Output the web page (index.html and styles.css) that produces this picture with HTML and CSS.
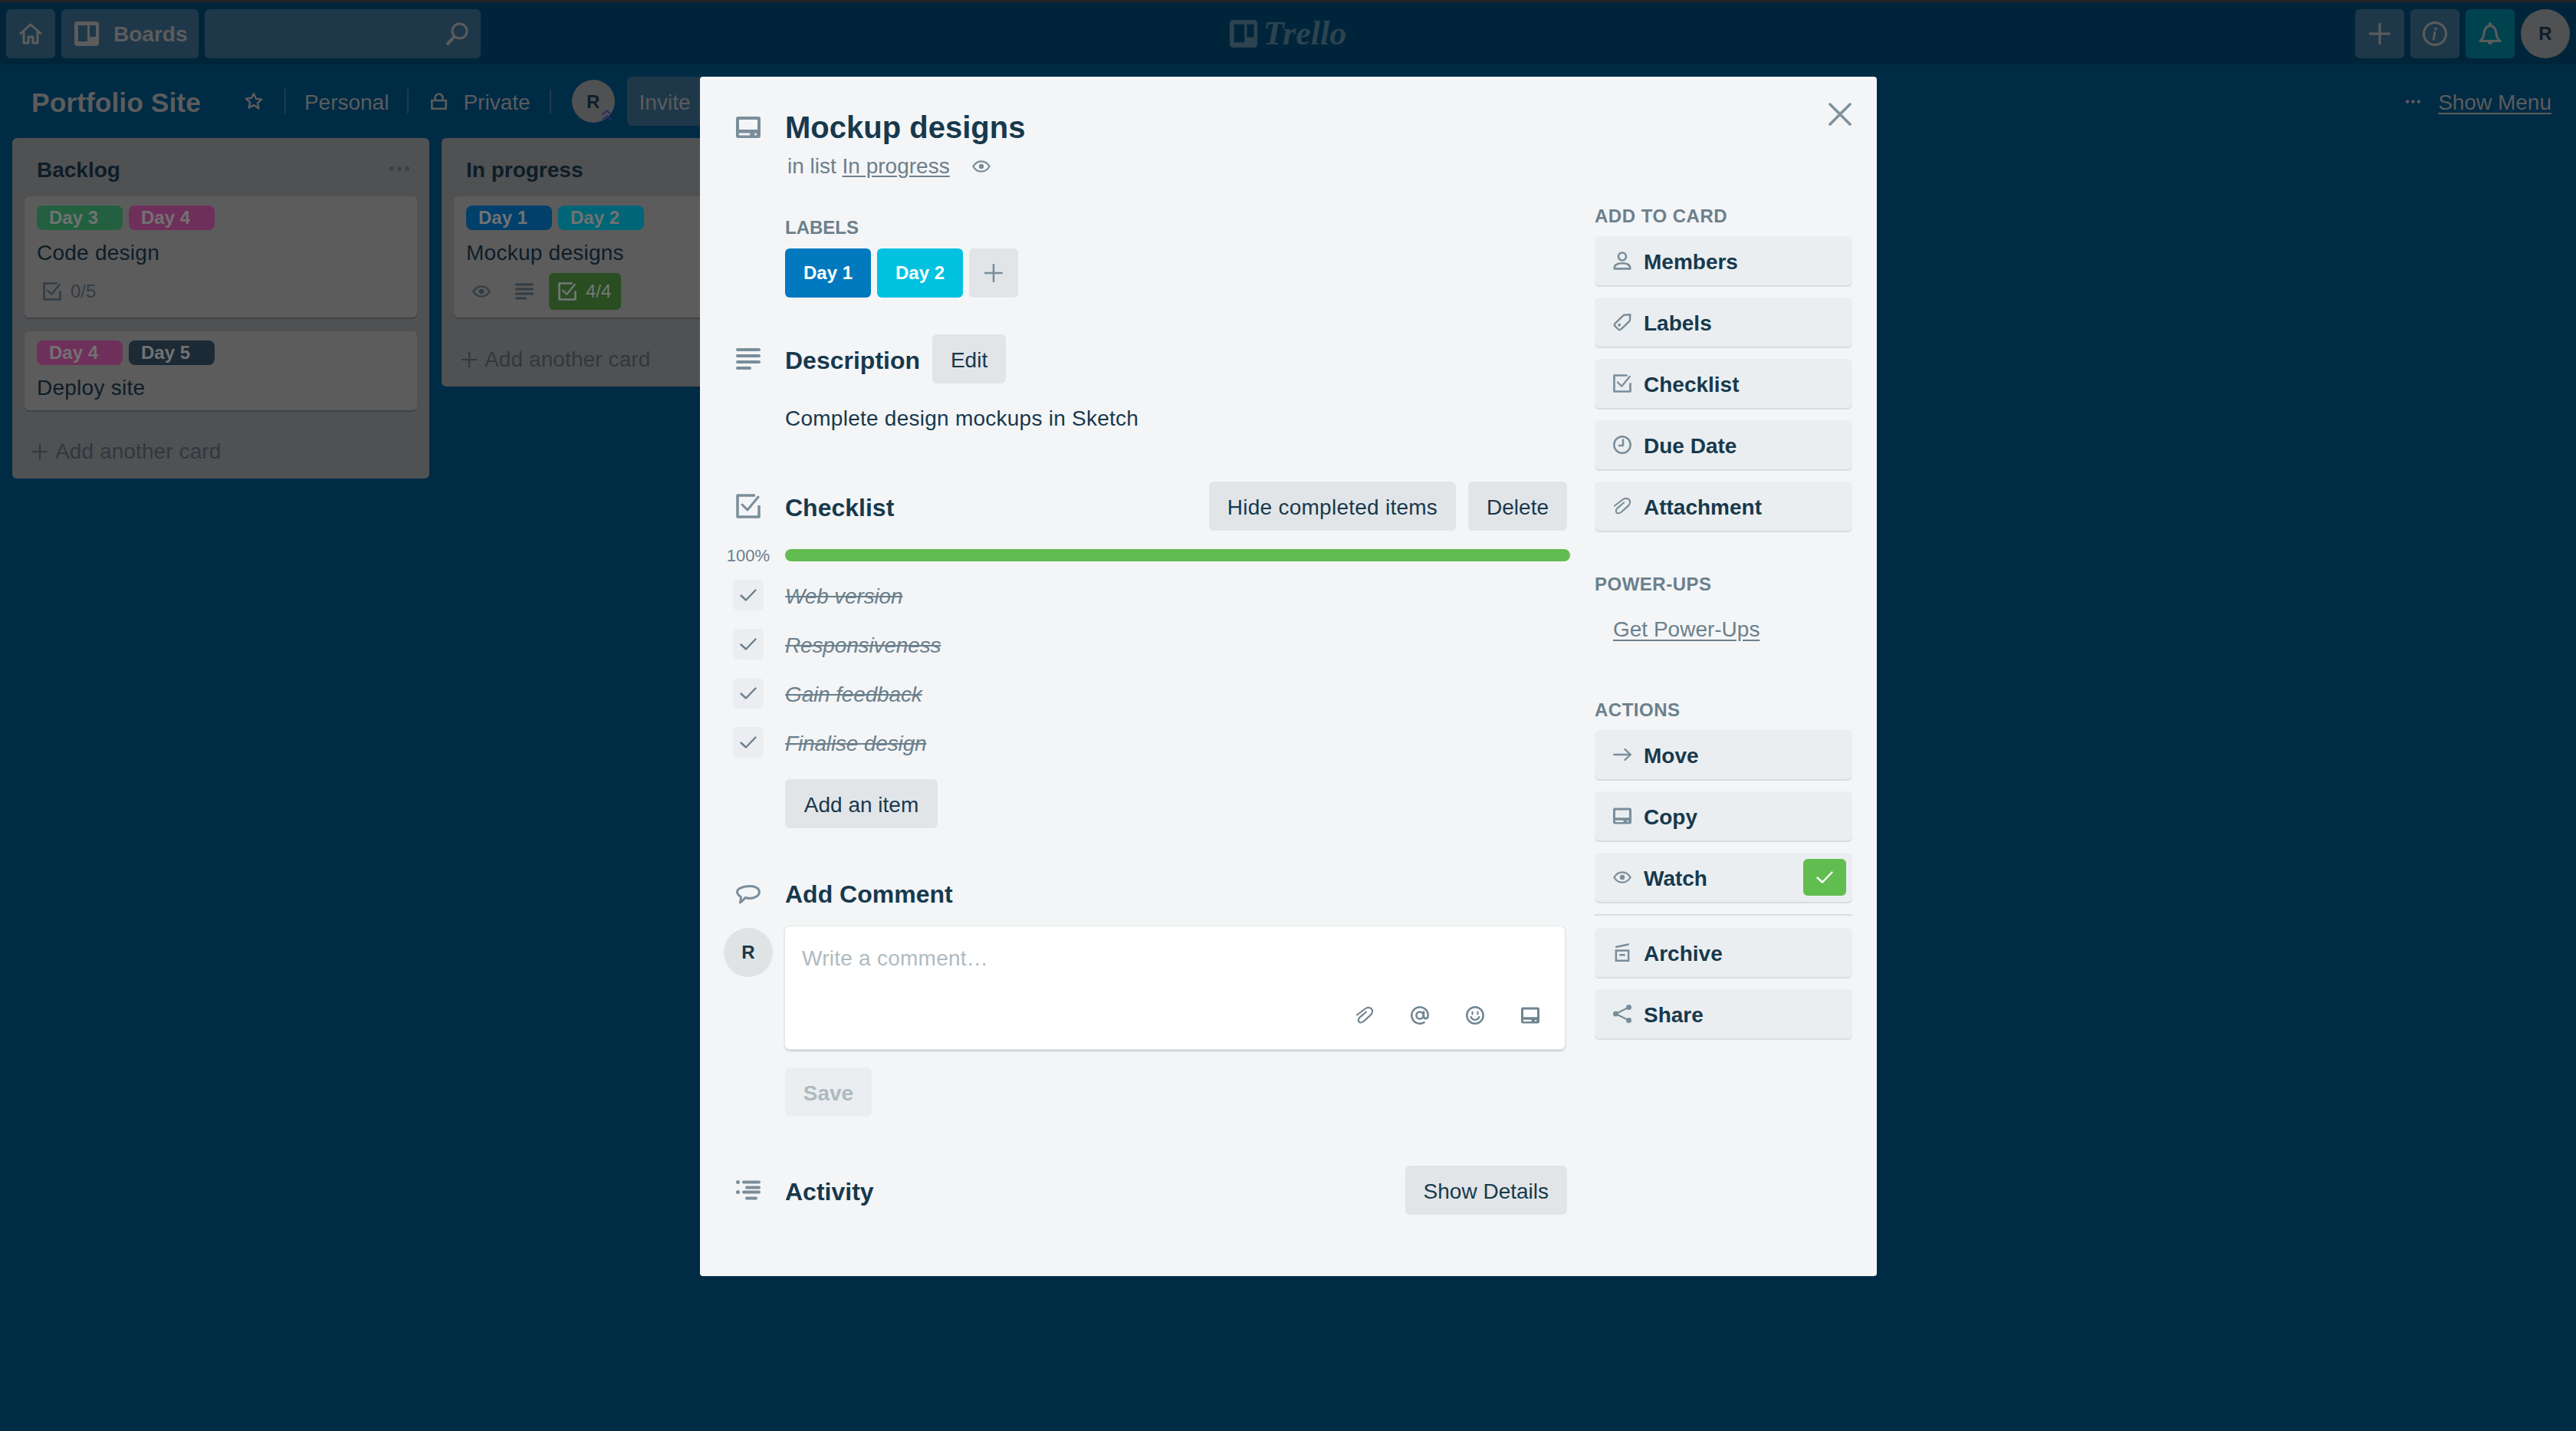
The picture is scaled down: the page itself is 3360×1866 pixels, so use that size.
FILE: index.html
```html
<!DOCTYPE html>
<html lang="en">
<head>
<meta charset="utf-8">
<title>Mockup designs on Portfolio Site</title>
<link rel="stylesheet" href="styles.css">
</head>
<body>
<svg class="sprite" xmlns="http://www.w3.org/2000/svg">
  <symbol id="i-card" viewBox="0 0 32 28"><path fill="currentColor" fill-rule="evenodd" d="M3 0h26a3 3 0 0 1 3 3v22a3 3 0 0 1-3 3H3a3 3 0 0 1-3-3V3a3 3 0 0 1 3-3zm1 4v13h24V4zm1 17.500a1.500 1.500 0 0 0 0 3h12a1.500 1.500 0 0 0 0-3zm20.500 0a1.500 1.500 0 0 0 0 3 1.500 1.500 0 0 0 0-3z"/></symbol>
  <symbol id="i-desc" viewBox="0 0 32 28"><g fill="currentColor"><rect width="32" height="4" rx="2"/><rect y="8" width="32" height="4" rx="2"/><rect y="16" width="32" height="4" rx="2"/><rect y="24" width="20" height="4" rx="2"/></g></symbol>
  <symbol id="i-check" viewBox="0 0 32 32"><path fill="none" stroke="currentColor" stroke-width="3.500" stroke-linejoin="round" d="M25 2H2v28h28V15"/><path fill="none" stroke="currentColor" stroke-width="3" stroke-linecap="round" stroke-linejoin="round" d="M8 14l7 7L29 4"/></symbol>
  <symbol id="i-eye" viewBox="0 0 24 16"><path fill="none" stroke="currentColor" stroke-width="2.200" d="M1.300 8C4 3.600 8 1.300 12 1.300S20 3.600 22.700 8C20 12.400 16 14.700 12 14.700S4 12.400 1.300 8z"/><circle cx="12" cy="8" r="3.200" fill="currentColor"/></symbol>
  <symbol id="i-plus" viewBox="0 0 24 24"><path fill="none" stroke="currentColor" stroke-width="2.600" stroke-linecap="round" d="M12 1v22M1 12h22"/></symbol>
  <symbol id="i-bubble" viewBox="0 0 32 25"><path fill="none" stroke="currentColor" stroke-width="3" stroke-linejoin="round" d="M19 1.600c6.500 0 11.400 3 11.400 7.400 0 5-5.500 8.400-12.400 8.400-2.200 0-4.300-.3-6-.9-1.500 2.300-3.800 4.700-6.600 6.500.8-2.300 1.200-4.500 1-7.500C3 13.500 1.600 11.300 1.600 9 1.600 4.600 9 1.600 19 1.600z"/></symbol>
  <symbol id="i-activity" viewBox="0 0 32 27"><g fill="currentColor"><circle cx="2.500" cy="3" r="2.500"/><rect x="8" y="1" width="24" height="4" rx="2"/><rect x="12" y="8" width="20" height="4" rx="2"/><circle cx="2.500" cy="16" r="2.500"/><rect x="8" y="14" width="24" height="4" rx="2"/><rect x="12" y="22" width="16" height="4" rx="2"/></g></symbol>
  <symbol id="i-clip" viewBox="0 0 24 24"><path fill="none" stroke="currentColor" stroke-width="2.200" stroke-linecap="round" stroke-linejoin="round" d="M2 11.500L12.500 3.500c3-2.300 7-2 8.700.3 1.700 2.300.8 5.700-2 8.300L11 19.500c-2.200 2-5 2.400-6.400.9-1.400-1.500-.9-4 1.300-6L14 7.500"/></symbol>
  <symbol id="i-at" viewBox="0 0 24 24"><path fill="none" stroke="currentColor" stroke-width="2.500" stroke-linecap="round" d="M17.500 21.200A10.700 10.700 0 1 1 22.700 12c0 2.500-1 4.200-2.800 4.200S17 14.800 17 12.500V7.500"/><circle cx="12" cy="12" r="4.600" fill="none" stroke="currentColor" stroke-width="2.500"/></symbol>
  <symbol id="i-smile" viewBox="0 0 24 24"><circle cx="12" cy="12" r="10.700" fill="none" stroke="currentColor" stroke-width="2.500"/><path fill="none" stroke="currentColor" stroke-width="2.200" stroke-linecap="round" d="M8.500 7.500v3M15.500 7.500v3M6.500 14c1 2.500 3 3.800 5.500 3.800s4.500-1.300 5.500-3.800"/></symbol>
  <symbol id="i-member" viewBox="0 0 22 22"><circle cx="11" cy="6" r="4.600" fill="none" stroke="currentColor" stroke-width="2.400"/><path fill="none" stroke="currentColor" stroke-width="2.400" stroke-linejoin="round" d="M1.500 20.500c0-4.500 3.500-6.500 9.500-6.500s9.500 2 9.500 6.500z"/></symbol>
  <symbol id="i-tag" viewBox="0 0 22 22"><path fill="none" stroke="currentColor" stroke-width="2.200" stroke-linejoin="round" d="M13 2.500L20.500 2 20 9.500 9.500 19.500c-1 1-2.500 1-3.500 0L2.500 16c-1-1-1-2.500 0-3.500z"/><circle cx="7.500" cy="14.500" r="1.800" fill="currentColor"/></symbol>
  <symbol id="i-clock" viewBox="0 0 24 24"><circle cx="12" cy="12" r="10.700" fill="none" stroke="currentColor" stroke-width="2.500"/><path fill="none" stroke="currentColor" stroke-width="2.500" stroke-linecap="round" stroke-linejoin="round" d="M13 5.500V13H8"/></symbol>
  <symbol id="i-arrow" viewBox="0 0 21 15"><path fill="none" stroke="currentColor" stroke-width="2" stroke-linecap="round" stroke-linejoin="round" d="M1 7.500h19M13.500 1.500l6.500 6-6.500 6"/></symbol>
  <symbol id="i-archive" viewBox="0 0 18 23"><path fill="none" stroke="currentColor" stroke-width="2.400" d="M1.200 9h15.600v12.800H1.200zM5.500 14.500h7"/><path stroke="currentColor" stroke-width="2.400" stroke-linecap="round" d="M1.500 4.500L16.500 1.500"/></symbol>
  <symbol id="i-share" viewBox="0 0 24 24"><g fill="currentColor"><circle cx="3.500" cy="12" r="3.500"/><circle cx="20.500" cy="3.500" r="3.500"/><circle cx="20.500" cy="20.500" r="3.500"/></g><path fill="none" stroke="currentColor" stroke-width="2.200" d="M3.500 12L20.500 3.500M3.500 12L20.500 20.500"/></symbol>
  <symbol id="i-tick" viewBox="0 0 22 16"><path fill="none" stroke="currentColor" stroke-width="2.400" stroke-linecap="round" stroke-linejoin="round" d="M1.500 8.500L8 14.500 20.500 1.500"/></symbol>
  <symbol id="i-boards" viewBox="0 0 32 32"><path fill="currentColor" fill-rule="evenodd" d="M4 0h24a4 4 0 0 1 4 4v24a4 4 0 0 1-4 4H4a4 4 0 0 1-4-4V4a4 4 0 0 1 4-4zm1 5v21h12V5zm15 0v15h8V5z"/></symbol>
  <symbol id="i-dots" viewBox="0 0 26 6"><g fill="currentColor"><circle cx="3" cy="3" r="3"/><circle cx="13" cy="3" r="3"/><circle cx="23" cy="3" r="3"/></g></symbol>
</svg>

<div class="page">
  <header class="topbar">
    <div class="topbar-left">
      <a class="nav-btn nav-square"><svg class="ico-home" viewBox="0 0 30 28"><path fill="none" stroke="currentColor" stroke-width="3" stroke-linecap="round" stroke-linejoin="round" d="M2 13.500L15 2l13 11.500M6 10.500V26h6v-8h6v8h6V10.500"/></svg></a>
      <a class="nav-btn nav-boards"><svg class="ico-32"><use href="#i-boards"/></svg><span class="nav-label">Boards</span></a>
      <div class="nav-btn nav-search"><svg class="ico-search" viewBox="0 0 30 30"><circle cx="18.500" cy="11.500" r="9.500" fill="none" stroke="currentColor" stroke-width="3"/><path stroke="currentColor" stroke-width="4" stroke-linecap="round" d="M11.500 19L3 28"/></svg></div>
    </div>
    <div class="logo"><svg class="ico-logo"><use href="#i-boards"/></svg><span class="logo-word">Trello</span></div>
    <div class="topbar-right">
      <a class="nav-btn nav-square"><svg class="ico-28"><use href="#i-plus"/></svg></a>
      <a class="nav-btn nav-square"><svg class="ico-info" viewBox="0 0 32 32"><circle cx="16" cy="16" r="14.500" fill="none" stroke="currentColor" stroke-width="3"/><path stroke="currentColor" stroke-width="2.800" stroke-linecap="round" d="M15.800 14.500l-1.600 9"/><circle cx="17" cy="9.500" r="1.900" fill="currentColor"/></svg></a>
      <a class="nav-btn nav-square nav-bell"><svg class="ico-bell" viewBox="0 0 30 32"><path fill="none" stroke="currentColor" stroke-width="3" stroke-linejoin="round" d="M2 25.500c2.500-2 4.500-4 5-10 .4-5 3.400-10 8-10s7.600 5 8 10c.5 6 2.500 8 5 10z"/><path fill="currentColor" d="M13 3a2 2 0 0 1 4 0v3h-4zM12 27h6a3 3 0 0 1-6 0z"/></svg></a>
      <div class="top-avatar">R</div>
    </div>
  </header>

  <div class="board-bar">
    <h1 class="board-name">Portfolio Site</h1>
    <svg class="ico-star" viewBox="0 0 24 24"><path fill="none" stroke="currentColor" stroke-width="2.400" stroke-linejoin="round" d="M12 2l3 6.700 7.300.8-5.400 4.900 1.500 7.200L12 17l-6.400 3.600 1.500-7.200L1.700 8.500 9 7.700z"/></svg>
    <span class="bar-sep"></span>
    <span class="bar-text">Personal</span>
    <span class="bar-sep bar-sep-b"></span>
    <svg class="ico-lock" viewBox="0 0 21 22"><path fill="none" stroke="currentColor" stroke-width="2.600" d="M1.300 10h18.400v10.700H1.300zM5.500 10V6.500a5 5 0 0 1 10 0V10"/></svg>
    <span class="bar-text bar-private">Private</span>
    <span class="bar-sep bar-sep-c"></span>
    <div class="board-avatar">R<svg class="ico-admin" viewBox="0 0 15 15"><path fill="none" stroke="#2a2a66" stroke-width="2" d="M1.500 6.500L7.500 1.500l6 5M1.500 13l6-5 6 5"/></svg></div>
    <a class="invite">Invite</a>
    <div class="bar-right"><svg class="ico-dots-small"><use href="#i-dots"/></svg><a class="show-menu">Show Menu</a></div>
  </div>

  <main class="lists">
    <section class="list">
      <div class="list-head"><h2>Backlog</h2><svg class="ico-dots"><use href="#i-dots"/></svg></div>
      <article class="card">
        <div class="card-labels"><span class="chip chip-green">Day 3</span><span class="chip chip-pink">Day 4</span></div>
        <p class="card-title">Code design</p>
        <div class="badges"><span class="badge"><svg class="ico-24"><use href="#i-check"/></svg>0/5</span></div>
      </article>
      <article class="card card-short">
        <div class="card-labels"><span class="chip chip-pink">Day 4</span><span class="chip chip-black">Day 5</span></div>
        <p class="card-title">Deploy site</p>
      </article>
      <div class="add-card"><svg class="ico-20"><use href="#i-plus"/></svg>Add another card</div>
    </section>
    <section class="list">
      <div class="list-head"><h2>In progress</h2></div>
      <article class="card">
        <div class="card-labels"><span class="chip chip-blue">Day 1</span><span class="chip chip-sky">Day 2</span></div>
        <p class="card-title">Mockup designs</p>
        <div class="badges">
          <span class="badge"><svg class="ico-eye-24"><use href="#i-eye"/></svg></span>
          <span class="badge badge-desc"><svg class="ico-desc-24"><use href="#i-desc"/></svg></span>
          <span class="badge badge-done"><svg class="ico-24"><use href="#i-check"/></svg>4/4</span>
        </div>
      </article>
      <div class="add-card"><svg class="ico-20"><use href="#i-plus"/></svg>Add another card</div>
    </section>
  </main>

  <div class="modal">
    <svg class="modal-close" viewBox="0 0 30 30"><path stroke="currentColor" stroke-width="3.600" stroke-linecap="round" d="M2 2l26 26M28 2L2 28"/></svg>
    <div class="modal-main">
      <div class="row row-title"><svg class="sec-icon ico-card"><use href="#i-card"/></svg><h2 class="modal-title">Mockup designs</h2></div>
      <p class="in-list">in list <a>In progress</a><svg class="ico-eye-24 in-list-eye"><use href="#i-eye"/></svg></p>

      <h3 class="caption labels-caption">LABELS</h3>
      <div class="label-row">
        <span class="label-big label-blue">Day 1</span>
        <span class="label-big label-sky">Day 2</span>
        <button class="btn btn-plus"><svg class="ico-24"><use href="#i-plus"/></svg></button>
      </div>

      <div class="row row-desc"><svg class="sec-icon ico-card"><use href="#i-desc"/></svg><h3 class="sec-title">Description</h3><button class="btn btn-edit">Edit</button></div>
      <p class="desc-text">Complete design mockups in Sketch</p>

      <div class="row row-check"><svg class="sec-icon ico-check-32"><use href="#i-check"/></svg><h3 class="sec-title">Checklist</h3>
        <div class="row-actions"><button class="btn btn-hide">Hide completed items</button><button class="btn">Delete</button></div>
      </div>
      <div class="progress"><span class="progress-num">100%</span><div class="progress-bar"></div></div>
      <ul class="items">
        <li class="item"><span class="tick"><svg class="ico-tick"><use href="#i-tick"/></svg></span><span class="item-text">Web version</span></li>
        <li class="item"><span class="tick"><svg class="ico-tick"><use href="#i-tick"/></svg></span><span class="item-text">Responsiveness</span></li>
        <li class="item"><span class="tick"><svg class="ico-tick"><use href="#i-tick"/></svg></span><span class="item-text">Gain feedback</span></li>
        <li class="item"><span class="tick"><svg class="ico-tick"><use href="#i-tick"/></svg></span><span class="item-text">Finalise design</span></li>
      </ul>
      <button class="btn btn-add">Add an item</button>

      <div class="row row-comment"><svg class="sec-icon ico-bubble"><use href="#i-bubble"/></svg><h3 class="sec-title">Add Comment</h3></div>
      <div class="comment">
        <div class="comment-avatar">R</div>
        <div class="comment-box">
          <span class="placeholder">Write a comment…</span>
          <div class="comment-tools">
            <svg class="ico-24"><use href="#i-clip"/></svg>
            <svg class="ico-24"><use href="#i-at"/></svg>
            <svg class="ico-24"><use href="#i-smile"/></svg>
            <svg class="ico-24"><use href="#i-card"/></svg>
          </div>
        </div>
      </div>
      <button class="btn btn-save">Save</button>

      <div class="row row-activity"><svg class="sec-icon ico-card"><use href="#i-activity"/></svg><h3 class="sec-title">Activity</h3><button class="btn btn-details">Show Details</button></div>
    </div>

    <aside class="sidebar">
      <h3 class="caption side-caption">ADD TO CARD</h3>
      <div class="side-group">
        <a class="side-btn"><svg class="side-ico"><use href="#i-member"/></svg>Members</a>
        <a class="side-btn"><svg class="side-ico"><use href="#i-tag"/></svg>Labels</a>
        <a class="side-btn"><svg class="side-ico"><use href="#i-check"/></svg>Checklist</a>
        <a class="side-btn"><svg class="side-ico"><use href="#i-clock"/></svg>Due Date</a>
        <a class="side-btn"><svg class="side-ico"><use href="#i-clip"/></svg>Attachment</a>
      </div>
      <h3 class="caption side-caption side-powerups">POWER-UPS</h3>
      <a class="get-powerups">Get Power-Ups</a>
      <h3 class="caption side-caption side-actions">ACTIONS</h3>
      <div class="side-group">
        <a class="side-btn"><svg class="side-ico"><use href="#i-arrow"/></svg>Move</a>
        <a class="side-btn"><svg class="side-ico"><use href="#i-card"/></svg>Copy</a>
        <a class="side-btn">
          <svg class="side-ico"><use href="#i-eye"/></svg>Watch
          <span class="watch-on"><svg class="ico-tick"><use href="#i-tick"/></svg></span>
        </a>
        <hr class="side-rule">
        <a class="side-btn"><svg class="side-ico"><use href="#i-archive"/></svg>Archive</a>
        <a class="side-btn"><svg class="side-ico"><use href="#i-share"/></svg>Share</a>
      </div>
    </aside>
  </div>
</div>
</body>
</html>
```

FILE: styles.css
```css
* { box-sizing: border-box; }
html, body { margin: 0; padding: 0; }
body { background: #002b45; font-family: "Liberation Sans", Arial, sans-serif; font-size: 28px; color: #17394d; overflow: hidden; }
h1, h2, h3, p, ul { margin: 0; padding: 0; }
ul { list-style: none; }
a { color: inherit; }
svg { display: block; flex: none; }
.sprite { width: 0; height: 0; position: absolute; }

.page { position: relative; width: 3360px; height: 1866px; overflow: hidden; background: #002b45; }

/* top bar */
.topbar { height: 84px; border-top: 3px solid #232323; background: #00253b; padding: 9px 8px 8px; display: grid; grid-template-columns: 1fr auto 1fr; align-items: center; color: #5c5c5c; }
.topbar-left, .topbar-right { display: flex; gap: 8px; }
.topbar-right { justify-content: flex-end; }
.nav-btn { height: 64px; border-radius: 6px; background: #1f3849; display: flex; align-items: center; justify-content: center; }
.nav-square { width: 64px; }
.nav-boards { width: 179px; gap: 19px; font-weight: 700; justify-content: flex-start; padding-left: 17px; }
.nav-label { padding-top: 2px; }
.nav-search { width: 360px; justify-content: flex-end; padding-right: 16px; }
.nav-bell { background: #00434f; }
.ico-home { width: 30px; height: 28px; }
.ico-32 { width: 32px; height: 32px; }
.ico-search { width: 30px; height: 30px; }
.ico-28 { width: 28px; height: 28px; }
.ico-info { width: 32px; height: 32px; }
.ico-bell { width: 30px; height: 32px; }
.top-avatar { width: 64px; height: 64px; border-radius: 50%; background: #505153; color: #0f1e28; font-weight: 700; font-size: 24px; display: flex; align-items: center; justify-content: center; }
.logo { display: flex; align-items: center; gap: 8px; color: #2c4350; }
.ico-logo { width: 36px; height: 36px; }
.logo-word { font-family: "Liberation Serif", serif; font-style: italic; font-weight: 700; font-size: 44px; line-height: 44px; }

/* board bar */
.board-bar { height: 96px; padding: 16px 32px 16px 41px; display: flex; align-items: center; color: #5c5c5c; }
.board-name { font-size: 35.5px; line-height: 60px; padding-top: 4px; font-weight: 700; }
.ico-star { width: 24px; height: 24px; margin-left: 57px; }
.bar-sep { width: 2px; height: 32px; background: #1f3a4c; margin: 0 24px 0 28px; }
.bar-sep-b { margin: 0 29px 0 24px; }
.bar-sep-c { margin: 0 27px 0 25px; }
.bar-text { line-height: 60px; padding-top: 4px; }
.ico-lock { width: 21px; height: 22px; }
.bar-private { margin-left: 21px; }
.board-avatar { position: relative; width: 56px; height: 56px; padding-top: 2px; border-radius: 50%; background: #505153; color: #0f1e28; font-weight: 700; font-size: 24px; display: flex; align-items: center; justify-content: center; }
.ico-admin { position: absolute; right: 3px; bottom: 2px; width: 15px; height: 15px; }
.invite { margin-left: 16px; width: 120px; height: 64px; border-radius: 6px; background: #1f3849; padding-left: 16px; line-height: 68px; }
.bar-right { margin-left: auto; display: flex; align-items: center; gap: 23px; }
.ico-dots-small { width: 19px; height: 5px; }
.show-menu { line-height: 60px; padding-top: 4px; text-decoration: underline; text-underline-offset: 4px; }

/* lists */
.lists { display: flex; gap: 16px; padding: 0 16px; align-items: flex-start; }
.list { width: 544px; padding: 0 16px; background: #505153; border-radius: 6px; flex: none; }
.list-head { height: 76px; padding: 22px 10px 14px 16px; display: flex; justify-content: space-between; }
.list-head h2 { font-size: 28px; line-height: 40px; font-weight: 700; color: #0d1d28; }
.ico-dots { width: 26px; height: 6px; margin-top: 15px; color: #3a4045; }
.card { background: #5c5c5c; border-radius: 6px; box-shadow: 0 2px 0 #3e4246; padding: 12px 16px 10px; margin-bottom: 16px; }
.card + .card { margin-top: 18px; }
.card-short { padding-bottom: 9px; margin-bottom: 15px; }
.card-labels { display: flex; gap: 8px; }
.chip { width: 112px; height: 32px; border-radius: 8px; padding-left: 16px; font-size: 24px; font-weight: 700; line-height: 32px; color: #727272; }
.chip-green { background: #22603f; }
.chip-pink { background: #6f2f5b; }
.chip-blue { background: #00406b; }
.chip-sky { background: #006577; }
.chip-black { background: #1c2a35; }
.card-title { margin-top: 10px; line-height: 40px; letter-spacing: .25px; color: #0d1d28; }
.badges { display: flex; margin-top: 6px; }
.badge { height: 48px; padding: 0 8px; display: flex; align-items: center; gap: 12px; font-size: 24px; color: #323d45; }
.badge-desc { margin-left: 16px; }
.badge-done { margin-left: 12px; padding: 0 13px 0 12px; background: #2a4d22; border-radius: 6px; color: #777; }
.ico-24 { width: 24px; height: 24px; }
.ico-20 { width: 20px; height: 20px; }
.ico-eye-24 { width: 24px; height: 16px; }
.ico-desc-24 { width: 24px; height: 24px; }
.add-card { height: 74px; padding: 11px 0 7px 10px; display: flex; align-items: center; gap: 10px; letter-spacing: .1px; color: #31383e; }

/* modal */
.modal { position: absolute; left: 913px; top: 100px; width: 1535px; height: 1564px; background: #f4f5f7; border-radius: 4px; display: flex; color: #17394d; }
.modal-close { position: absolute; right: 33px; top: 34px; width: 30px; height: 30px; color: #7f919c; }
.modal-main { width: 1135px; padding: 42px 0 0 47px; flex: none; }
.row { display: flex; align-items: center; }
.sec-icon { margin-right: 32px; color: #7a8e9a; }
.ico-card { width: 32px; height: 28px; }
.ico-check-32 { width: 32px; height: 32px; }
.ico-bubble { width: 32px; height: 25px; }
.modal-title { font-size: 40px; line-height: 48px; font-weight: 700; }
.in-list { margin: 9px 0 0 67px; line-height: 36px; color: #6b808c; display: flex; align-items: center; white-space: pre; }
.in-list a { text-decoration: underline; text-underline-offset: 3px; }
.in-list-eye { margin-left: 29px; color: #7a8e9a; }
.caption { font-size: 24px; line-height: 32px; font-weight: 700; color: #6b808c; }
.labels-caption { margin: 46px 0 0 64px; }
.label-row { display: flex; gap: 8px; margin: 11px 0 0 64px; }
.label-big { width: 112px; height: 64px; border-radius: 6px; color: #fff; font-size: 24px; font-weight: 700; line-height: 64px; text-align: center; }
.label-blue { background: #0079bf; }
.label-sky { background: #00c2e0; }
.btn { height: 64px; padding: 4px 24px 0; border: 0; border-radius: 6px; background: #e2e5e8; color: #17394d; font: 28px/60px "Liberation Sans", Arial, sans-serif; flex: none; }
.btn-plus { width: 64px; padding: 0 20px; color: #7a8e9a; }
.btn-hide { letter-spacing: .25px; }
.sec-title { font-size: 32px; line-height: 40px; font-weight: 700; }
.row-desc .sec-title, .row-check .sec-title, .row-activity .sec-title { padding-top: 4px; }
.row-desc { margin-top: 48px; }
.btn-edit { margin-left: 16px; width: 96px; padding: 4px 0 0; }
.desc-text { margin: 26px 0 0 64px; line-height: 40px; letter-spacing: .25px; }
.row-check { margin-top: 62px; }
.row-actions { margin-left: auto; margin-right: 4px; display: flex; gap: 16px; }
.progress { position: relative; margin: 24px 0 0 64px; }
.progress-num { position: absolute; right: 100%; margin-right: 20px; top: -11px; font-size: 22px; line-height: 40px; color: #6b808c; }
.progress-bar { height: 16px; background: #61bd4f; border-radius: 8px; }
.items { margin: 24px 0 0 -4px; display: flex; flex-direction: column; gap: 24px; }
.item { display: flex; align-items: center; gap: 28px; height: 40px; }
.tick { width: 40px; height: 40px; border-radius: 6px; background: #ebedf0; color: #6b808c; display: flex; align-items: center; justify-content: center; }
.ico-tick { width: 22px; height: 16px; }
.item-text { font-style: italic; padding-top: 4px; letter-spacing: -.15px; color: #6b808c; text-decoration: line-through; }
.btn-add { display: block; margin: 28px 0 0 64px; width: 199px; padding: 4px 0 0; }
.row-comment { margin-top: 66px; }
.comment { position: relative; margin: 22px 7px 0 64px; }
.comment-avatar { position: absolute; left: -80px; top: 2px; width: 64px; height: 64px; border-radius: 50%; background: #dfe3e6; font-size: 24px; font-weight: 700; display: flex; align-items: center; justify-content: center; }
.comment-box { height: 160px; background: #fff; border-radius: 6px; box-shadow: 0 0 0 1px #e3e6e8, 0 2px 3px rgba(9,45,66,.3); padding: 24px 22px 32px; display: flex; flex-direction: column; justify-content: space-between; }
.placeholder { line-height: 36px; letter-spacing: .25px; color: #b0bbc2; }
.comment-tools { display: flex; justify-content: flex-end; gap: 48px; color: #6f8591; padding-right: 11px; }
.btn-save { display: block; margin: 24px 0 0 64px; width: 113px; padding: 4px 0 0; background: #ebeef0; color: #aeb9c0; font-weight: 700; }
.row-activity { margin: 64px 4px 0 0; }
.btn-details { margin-left: auto; }

/* sidebar */
.sidebar { width: 336px; margin-left: 32px; padding-top: 164px; flex: none; }
.side-caption { height: 32px; padding-top: 2px; letter-spacing: .5px; }
.side-group { margin-top: 12px; display: flex; flex-direction: column; gap: 16px; }
.side-btn { height: 64px; position: relative; display: flex; align-items: center; gap: 16px; padding: 4px 0 0 24px; background: #ebeef0; border-radius: 6px; box-shadow: 0 2px 0 #d9dde1; font-weight: 700; }
.side-ico { width: 24px; height: 24px; margin-top: -4px; color: #7a8e9a; }
.side-powerups { margin-top: 52px; }
.get-powerups { display: block; margin: 25px 0 0 24px; line-height: 40px; color: #6b808c; text-decoration: underline; text-underline-offset: 4px; }
.side-actions { margin-top: 67px; }
.watch-on { position: absolute; right: 8px; top: 8px; width: 56px; height: 48px; border-radius: 6px; background: #61bd4f; color: #fff; display: flex; align-items: center; justify-content: center; }
.side-rule { margin: 0; height: 2px; border: 0; background: #d9dde1; }
```
